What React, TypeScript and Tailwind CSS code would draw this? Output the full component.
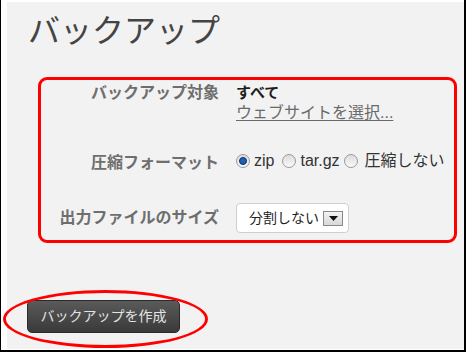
import React from "react";

const FONT = '"Liberation Sans", "Noto Sans CJK JP", sans-serif';

function Radio({ checked }: { checked?: boolean }) {
  return (
    <span className="inline-flex w-[14px] h-[14px] rounded-full border border-[#9a9a9a] bg-gradient-to-b from-[#dcdcdc] to-[#fafafa] items-center justify-center shrink-0">
      {checked ? (
        <span className="w-[8px] h-[8px] rounded-full bg-[#1f5fb8] border border-[#0b2f66]" />
      ) : null}
    </span>
  );
}

export default function App() {
  return (
    <div
      className="relative w-[466px] h-[352px] bg-white border-l border-r-2 border-b-2 border-black pl-[6px] pt-[2px] pb-[1px] flex overflow-hidden"
      style={{ fontFamily: FONT }}
    >
      <div className="flex-1 bg-[#f2f2f2] flex flex-col">
        <div className="ml-[21px] mt-[9px] text-[32px] leading-[40px] font-normal text-[#444]">
          バックアップ
        </div>

        <div className="ml-[31px] mt-[26px] w-[419px] border-[3px] border-[#ff0000] rounded-[9px] pt-[3px] pb-[7px] flex flex-col">
          <div className="flex items-start">
            <div className="w-[178px] text-right text-[16px] leading-[20px] font-bold text-[#6e6e6e]">
              バックアップ対象
            </div>
            <div className="ml-[17px] flex flex-col leading-[20px]">
              <span className="text-[15px] font-bold text-[#1e1e1e]">すべて</span>
              <span className="text-[16px] text-[#6a6a6a] underline underline-offset-2">ウェブサイトを選択...</span>
            </div>
          </div>

          <div className="flex items-center mt-[28px] h-[20px]">
            <div className="w-[178px] text-right text-[16px] leading-[20px] font-bold text-[#6e6e6e] pt-[4px]">
              圧縮フォーマット
            </div>
            <div className="ml-[17px] flex items-center text-[16px] leading-[20px] text-[#333] whitespace-nowrap">
              <Radio checked />
              <span className="ml-[4px]">zip</span>
              <span className="ml-[8px] flex"><Radio /></span>
              <span className="ml-[4px]">tar.gz</span>
              <span className="ml-[4px] flex"><Radio /></span>
              <span className="ml-[7px]">圧縮しない</span>
            </div>
          </div>

          <div className="flex items-center mt-[32px]">
            <div className="w-[178px] text-right text-[16px] leading-[20px] font-bold text-[#6e6e6e]">
              出力ファイルのサイズ
            </div>
            <div className="ml-[17px] w-[113px] h-[30px] bg-white border border-[#cfcfcf] rounded-[4px] flex items-center pl-[12px] pr-[5px] text-[14px] text-[#222] whitespace-nowrap">
              <span className="flex-1">分割しない</span>
              <span className="ml-[3px] w-[20px] h-[15px] border border-[#8a8a8a] bg-gradient-to-b from-[#f4f4f4] to-[#d8d8d8] flex items-center justify-center shrink-0">
                <svg width="9" height="5" viewBox="0 0 9 5">
                  <path d="M0 0 L9 0 L4.5 5 Z" fill="#111" />
                </svg>
              </span>
            </div>
          </div>
        </div>

        <div className="ml-[20px] mt-[57px] w-[153px] h-[33px] rounded-[5px] border border-[#2a2a2a] bg-gradient-to-b from-[#5a5a5a] to-[#3a3a3a] flex items-center justify-center text-[14px] text-[#e4e4e4]">
          バックアップを作成
        </div>
      </div>

      <div className="absolute left-[2px] top-[290px] w-[205px] h-[58px] rounded-[50%] border-[3px] border-[#ff0000] pointer-events-none" />
    </div>
  );
}
